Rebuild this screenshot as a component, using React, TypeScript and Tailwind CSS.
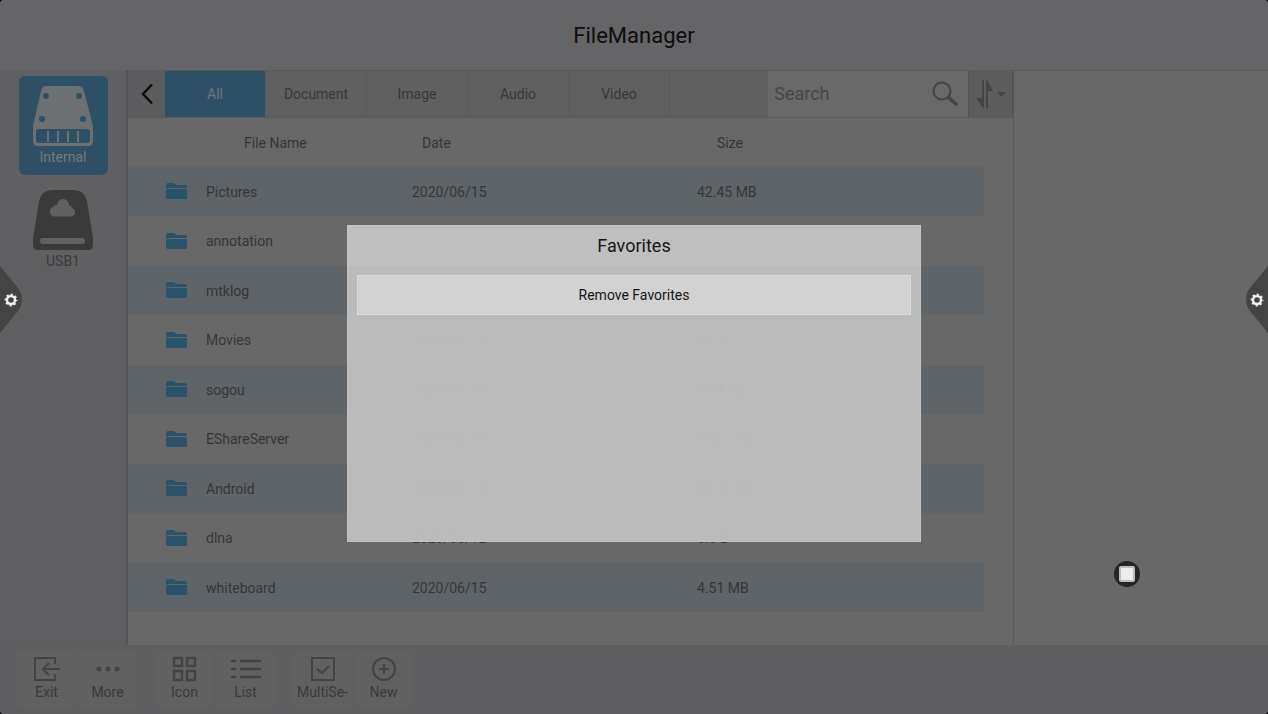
import { useState } from "react"
import type { ReactNode } from "react"

const files = [
  { name: "Pictures", date: "2020/06/15", size: "42.45 MB" },
  { name: "annotation", date: "2020/06/12", size: "0.0 B" },
  { name: "mtklog", date: "2020/06/12", size: "0.0 B" },
  { name: "Movies", date: "2020/06/12", size: "0.0 B" },
  { name: "sogou", date: "2020/06/12", size: "5.84 KB" },
  { name: "EShareServer", date: "2020/06/12", size: "332.6 KB" },
  { name: "Android", date: "2020/06/12", size: "33.32 KB" },
  { name: "dlna", date: "2020/06/12", size: "0.0 B" },
  { name: "whiteboard", date: "2020/06/15", size: "4.51 MB" },
]

const tabs = ["All", "Document", "Image", "Audio", "Video"]

function InternalIcon() {
  return (
    <svg width="60" height="60" viewBox="0 0 60 60" aria-hidden="true">
      <path d="M13 0H45Q50 0 51 5L60 40V55Q60 60 55 60H5Q0 60 0 55V40L8 5Q9 0 13 0Z" fill="#6c7073" />
      <g fill="#2d5065">
        <circle cx="13" cy="10" r="3" />
        <circle cx="46" cy="10" r="3" />
        <circle cx="9" cy="33" r="3" />
        <circle cx="50" cy="33" r="3" />
        <rect x="3" y="43" width="54" height="14" rx="3" />
      </g>
      <path d="M15 45V56M25 45V56M35 45V56M45 45V56" stroke="#6c7073" strokeWidth="2" />
    </svg>
  )
}

function UsbIcon() {
  return (
    <svg width="60" height="60" viewBox="0 0 60 60" aria-hidden="true">
      <path d="M19 0H41Q51 0 54 11L60 48V55Q60 60 55 60H5Q0 60 0 55V48L6 11Q9 0 19 0Z" fill="#3a3a3b" />
      <path d="M21 26.500a5 5 0 0 1-1-9.500a4 4 0 0 1 4-2a6 6 0 0 1 12 0a4 4 0 0 1 3 3a4.500 4.500 0 0 1 0 8.500Z" fill="#616163" />
      <rect x="7" y="48" width="45" height="6" rx="3" fill="#616163" />
    </svg>
  )
}

function FolderIcon() {
  return (
    <svg width="21" height="17" viewBox="0 0 21 17" fill="#2a5269" aria-hidden="true">
      <path d="M0 2Q0 0 2 0H8L10 2H19Q21 2 21 4V5H3Q1 5 0 6Z" />
      <path d="M2 6H20Q21 6 21 7V15Q21 16 20 16H2Q0 16 0 14V8Q0 6 2 6Z" />
    </svg>
  )
}

function Gear() {
  return (
    <svg width="14" height="14" viewBox="0 0 14 14" aria-hidden="true">
      <circle cx="7" cy="7" r="4" fill="none" stroke="#f0f0f0" strokeWidth="2.400" />
      <circle cx="7" cy="7" r="5.500" fill="none" stroke="#f0f0f0" strokeWidth="1.800" strokeDasharray="2.160 2.160" strokeDashoffset="1" />
    </svg>
  )
}

const strokeProps = {
  width: 32,
  height: 28,
  viewBox: "0 0 32 28",
  fill: "none",
  stroke: "#434344",
  strokeWidth: 2,
  "aria-hidden": true,
}

const toolGroups: { label: string; icon: ReactNode }[][] = [
  [
    {
      label: "Exit",
      icon: (
        <svg {...strokeProps}>
          <path d="M24 9V3H4V25H24V19M29 14H12M18 8L12 14L18 20" />
        </svg>
      ),
    },
    {
      label: "More",
      icon: (
        <svg {...strokeProps} fill="#434344" stroke="none">
          <circle cx="7" cy="14" r="2.500" />
          <circle cx="16" cy="14" r="2.500" />
          <circle cx="25" cy="14" r="2.500" />
        </svg>
      ),
    },
  ],
  [
    {
      label: "Icon",
      icon: (
        <svg {...strokeProps} strokeWidth={2.5}>
          <path d="M5 3H13V11H5ZM18 3H26V11H18ZM5 16H13V25H5ZM18 16H26V25H18Z" />
        </svg>
      ),
    },
    {
      label: "List",
      icon: (
        <svg {...strokeProps} strokeWidth={2.5}>
          <path d="M1 6H6M10 6H31M1 14H6M10 14H31M1 22H6M10 22H31" />
        </svg>
      ),
    },
  ],
  [
    {
      label: "MultiSe-",
      icon: (
        <svg {...strokeProps}>
          <path d="M5 3H27V25H5ZM10 14L15 18L22 11" />
        </svg>
      ),
    },
    {
      label: "New",
      icon: (
        <svg {...strokeProps}>
          <circle cx="16" cy="14" r="11" />
          <path d="M16 9V19M11 14H21" />
        </svg>
      ),
    },
  ],
]

function Sidebar() {
  return (
    <nav className="flex w-32 shrink-0 flex-col items-center gap-3 border-r-2 border-[#555559] bg-[#606062] pt-1.5 text-sm leading-4">
      <button className="flex h-[99px] w-[89px] flex-col items-center rounded-md bg-[#2d5065] pt-2.5 text-[#75797c]">
        <InternalIcon />
        <span className="mt-[3px]">Internal</span>
      </button>
      <button className="flex w-[89px] flex-col items-center pt-[3px] text-[#39393a]">
        <UsbIcon />
        <span className="mt-[3px]">USB1</span>
      </button>
    </nav>
  )
}

function Toolbar() {
  const [active, setActive] = useState("All")

  return (
    <div className="flex h-12 border-y border-[#59595b] bg-[#606060]">
      <button aria-label="Back" className="flex w-[37px] items-center justify-center bg-[#5d5d60]">
        <svg width="14" height="22" viewBox="0 0 14 22" fill="none" stroke="#0b0b0b" strokeWidth="2.500" aria-hidden="true">
          <path d="M12 1.500L3 11L12 20.500" />
        </svg>
      </button>
      <div className="flex flex-1">
        {tabs.map((tab) => (
          <button
            key={tab}
            onClick={() => setActive(tab)}
            className={`w-[101px] border-r border-[#5b5b5c] text-sm ${
              active === tab ? "bg-[#2d5065] text-[#6b7780]" : "text-[#363637]"
            }`}
          >
            {tab}
          </button>
        ))}
      </div>
      <label className="flex w-[200px] items-center bg-[#696969] px-1.5">
        <input
          type="text"
          aria-label="Search"
          placeholder="Search"
          className="w-0 flex-1 bg-transparent text-lg text-[#333] outline-none placeholder:text-[#464646]"
        />
        <svg width="32" height="28" viewBox="0 0 32 28" fill="none" stroke="#454545" aria-hidden="true">
          <circle cx="12" cy="11" r="8.500" strokeWidth="2" />
          <path d="M18 17L27 25" strokeWidth="3.500" />
        </svg>
      </label>
      <button aria-label="Sort" className="flex w-[45px] items-center justify-center border-x border-[#535353] bg-[#5d5d5d]">
        <svg width="32" height="30" viewBox="0 0 32 30" aria-hidden="true">
          <path d="M8 1V27L2 19M12 29V3L17 12" fill="none" stroke="#444" strokeWidth="2" />
          <path d="M2 19H8V27ZM12 3V12H17ZM22 13H31L26.500 18Z" fill="#444" />
        </svg>
      </button>
    </div>
  )
}

function FileTable() {
  return (
    <table className="mr-[29px] table-fixed border-collapse text-left text-sm text-[#353536]">
      <colgroup>
        <col className="w-[284px]" />
        <col className="w-[285px]" />
        <col />
      </colgroup>
      <thead>
        <tr className="h-[49px]">
          <th className="pl-[116px] font-normal">File Name</th>
          <th className="pl-2.5 font-normal">Date</th>
          <th className="pl-5 font-normal">Size</th>
        </tr>
      </thead>
      <tbody>
        {files.map((file) => (
          <tr key={file.name} className="h-[49px] odd:bg-[#5e6468] even:h-[50px]">
            <td className="p-0 pl-[38px]">
              <div className="flex items-center gap-[19px]">
                <FolderIcon />
                {file.name}
              </div>
            </td>
            <td className="p-0">{file.date}</td>
            <td className="p-0">{file.size}</td>
          </tr>
        ))}
      </tbody>
    </table>
  )
}

function FavoritesDialog() {
  return (
    <div className="fixed inset-0 flex items-start justify-center pt-[225px]">
      <div
        role="dialog"
        aria-labelledby="favorites-title"
        className="flex h-[317px] w-[574px] flex-col border border-[#c3c3c3] bg-[#c0c0c1]/95 text-[#161616]"
      >
        <h2 id="favorites-title" className="h-10 bg-[#bfbfbf] text-center text-lg leading-10">
          Favorites
        </h2>
        <div className="bg-[#bbbbbb] px-[9px] pt-[9px]">
          <button className="block h-10 w-full border border-[#dadada] bg-[#d2d2d2] text-sm">Remove Favorites</button>
        </div>
      </div>
    </div>
  )
}

export default function App() {
  return (
    <div className="bg-black font-[Roboto,sans-serif]">
      <div className="flex min-h-screen flex-col overflow-hidden rounded-sm bg-[#606062]">
        <header className="flex h-[70px] items-center justify-center bg-[#656568]">
          <h1 className="text-[22px] text-[#0d0d0d]">FileManager</h1>
        </header>

        <div className="flex flex-1">
          <Sidebar />
          <main className="flex min-w-0 flex-[886] flex-col border-r border-[#58585b] bg-[#686868]">
            <Toolbar />
            <FileTable />
          </main>
          <aside className="flex-[254] border-t border-[#58585b] bg-[#686868]" />
        </div>

        <footer className="flex h-[69px] gap-[18px] bg-[#5f5f61] px-[17px] pt-1.5">
          {toolGroups.map((group) => (
            <div key={group[0].label} className="flex gap-0.5">
              {group.map((tool) => (
                <button
                  key={tool.label}
                  className="flex h-14 w-[59px] flex-col items-center bg-[#616161] pt-1 text-sm leading-[18px] text-[#383839]"
                >
                  {tool.icon}
                  {tool.label}
                </button>
              ))}
            </div>
          ))}
        </footer>
      </div>

      <FavoritesDialog />

      {/* Edge handles */}
      <button aria-label="Left menu" className="fixed top-[266px] left-0 flex h-[67px] w-[22px] items-center justify-center">
        <svg className="absolute inset-0" width="22" height="67" viewBox="0 0 22 67" fill="#444445" aria-hidden="true">
          <path d="M0 0L18 22Q22 27 22 33Q22 40 18 45L0 67Z" />
        </svg>
        <span className="relative">
          <Gear />
        </span>
      </button>
      <button aria-label="Right menu" className="fixed top-[266px] right-0 flex h-[67px] w-[22px] items-center justify-center">
        <svg className="absolute inset-0" width="22" height="67" viewBox="0 0 22 67" fill="#444445" aria-hidden="true">
          <path d="M22 0L4 22Q0 27 0 33Q0 40 4 45L22 67Z" />
        </svg>
        <span className="relative">
          <Gear />
        </span>
      </button>

      {/* Floating pointer */}
      <button
        aria-label="Stop"
        className="fixed right-32 bottom-[127px] flex h-[26px] w-[26px] items-center justify-center rounded-full bg-[#252525]"
      >
        <span className="h-4 w-4 rounded-xs border-2 border-[#bdbdbd] bg-[#ededed]" />
      </button>
    </div>
  )
}
